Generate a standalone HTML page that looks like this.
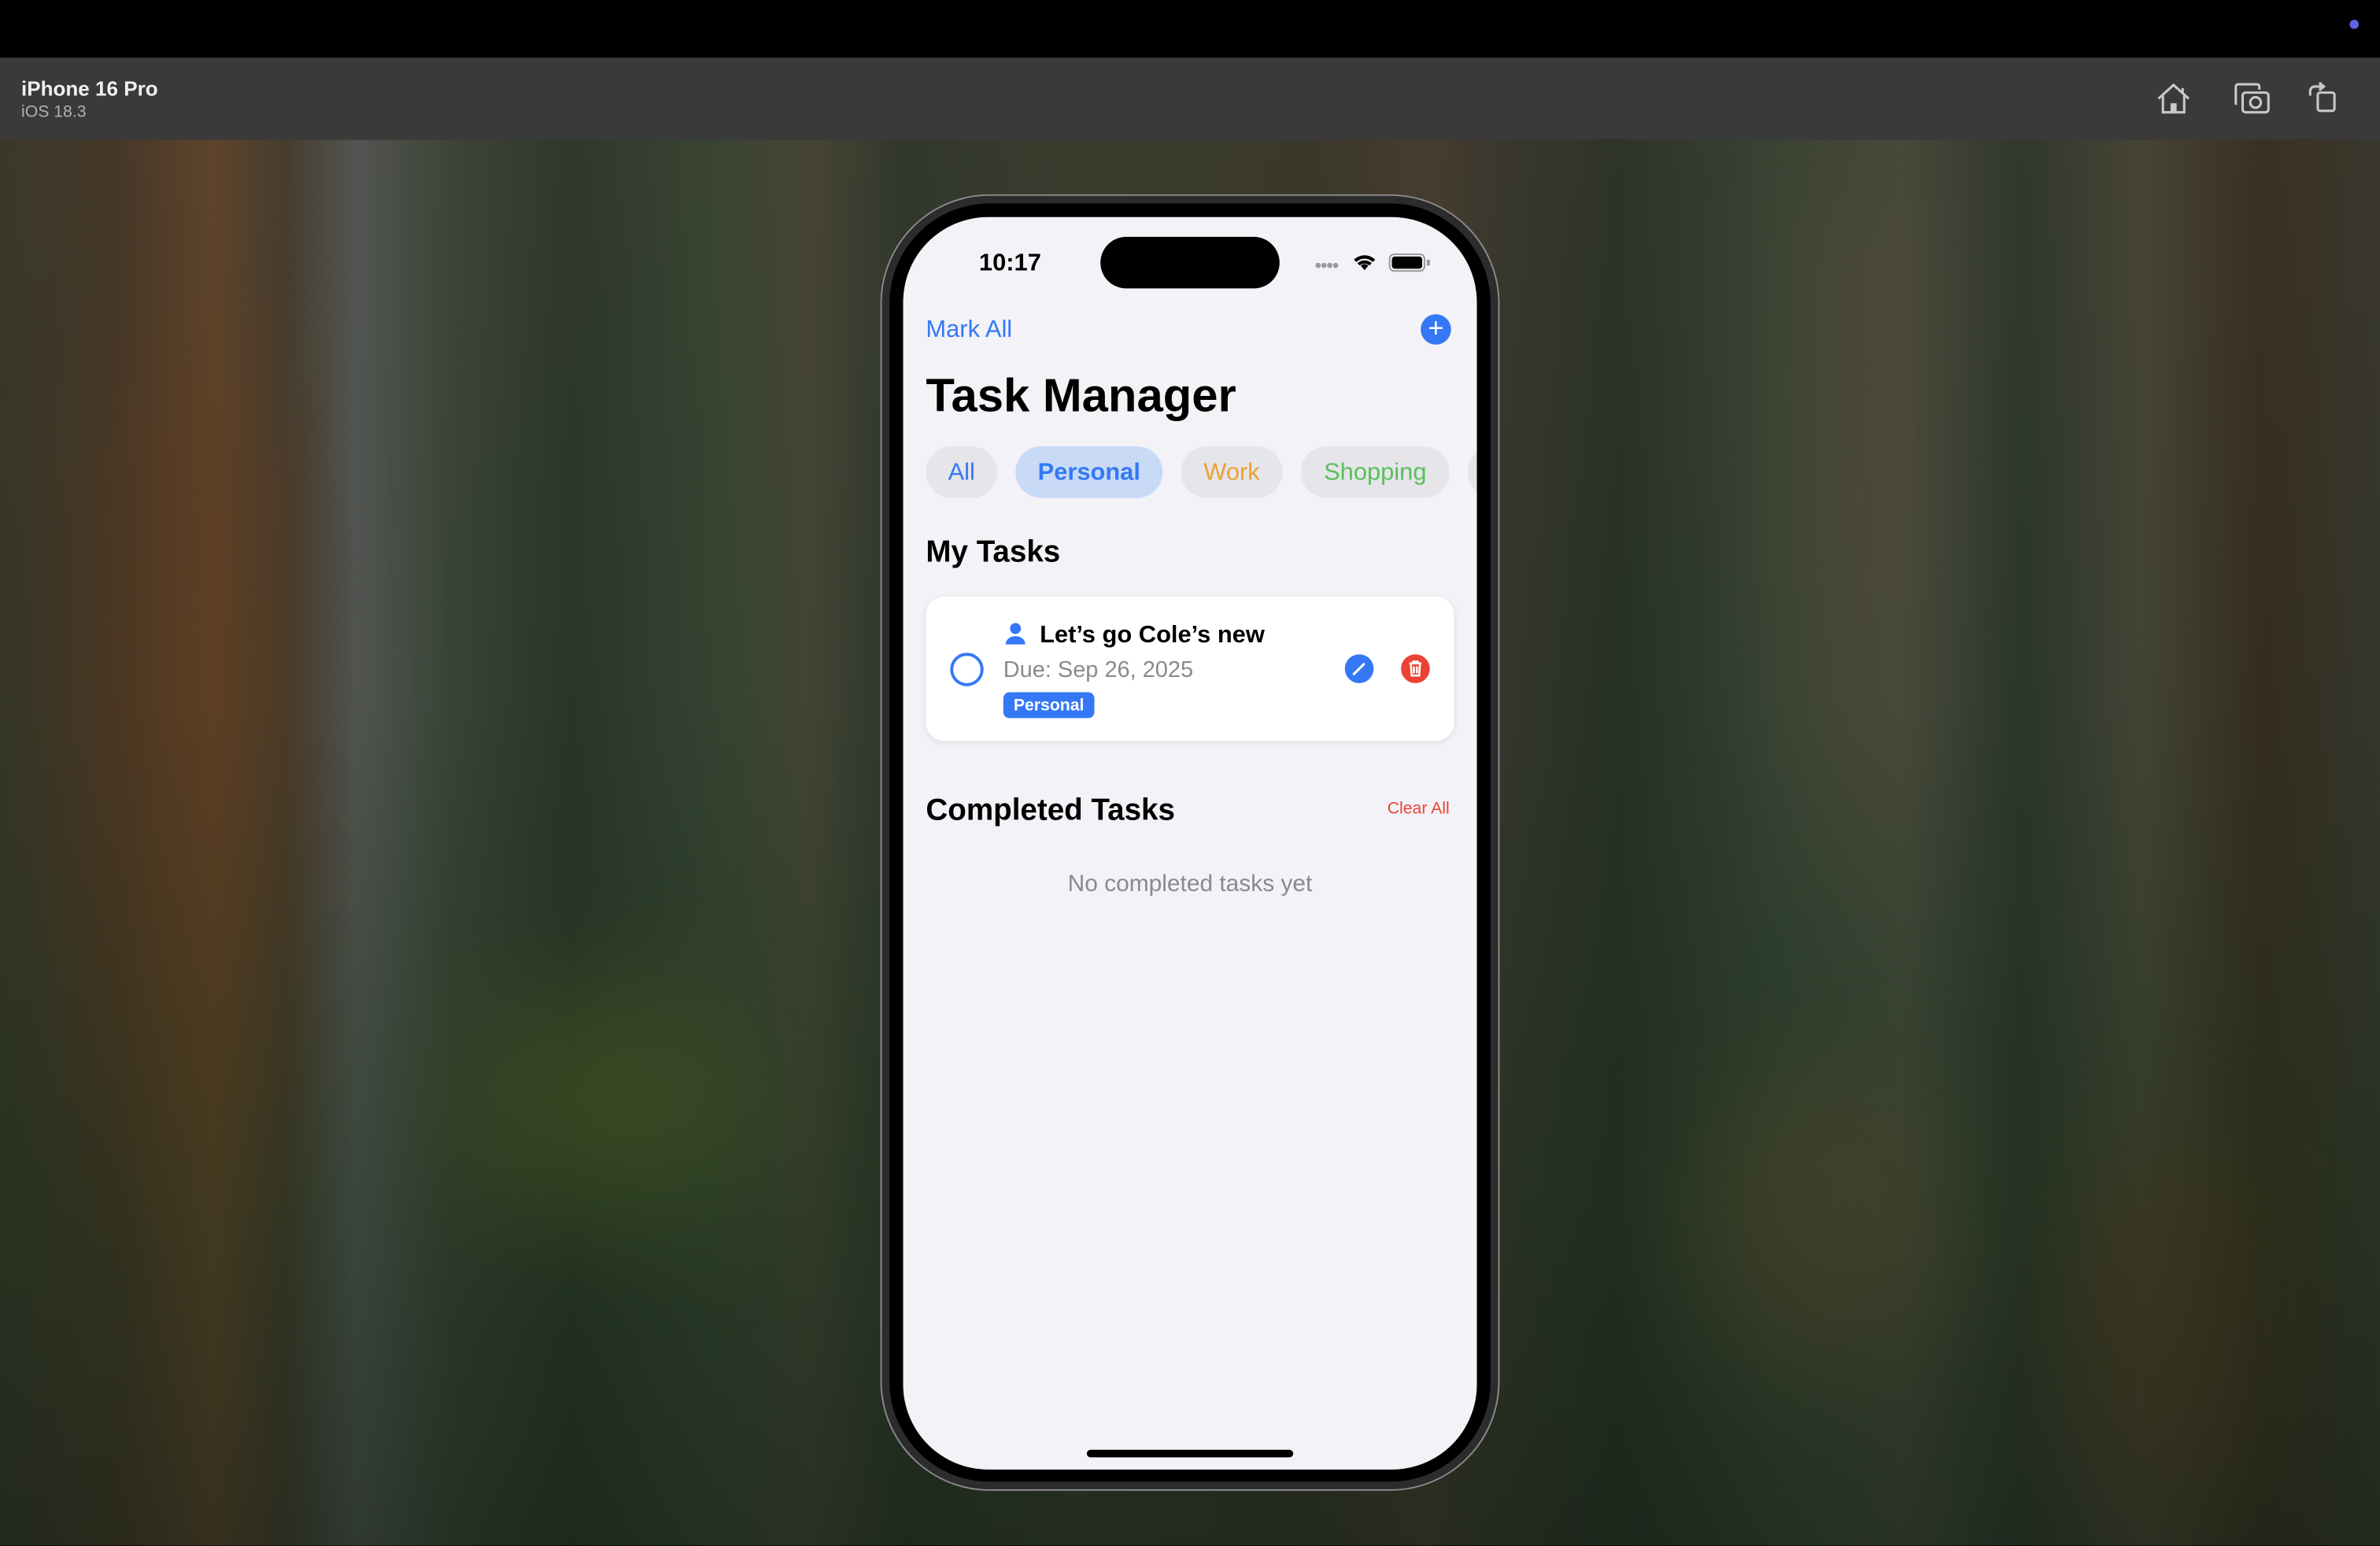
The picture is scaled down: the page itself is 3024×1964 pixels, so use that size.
<!DOCTYPE html>
<html><head><meta charset="utf-8"><style>
*{margin:0;padding:0;box-sizing:border-box}
html,body{width:3024px;height:1964px;overflow:hidden;background:#000}
#s{position:absolute;left:0;top:0;width:1568px;height:1018px;transform:scale(1.928571);transform-origin:0 0;font-family:"Liberation Sans",sans-serif}
.topbar{position:absolute;left:0;top:0;width:1568px;height:38px;background:#000}
.tool{position:absolute;left:0;top:38px;width:1568px;height:54px;background:#3a3a3a}
.bg{position:absolute;left:0;top:92px;width:1568px;height:926px;overflow:hidden;
background:linear-gradient(90deg,#3a3a2c 0%,#4a3a28 5%,#6a4a2c 9%,#4a4030 12%,#5a6060 15%,#3e4a3a 19%,#2c3a2c 24%,#3a4a36 30%,#4a4a3a 34%,#2e3a2c 38%,#3a4030 45%,#3a3a2c 55%,#4a4030 60%,#3a3a30 63%,#2a3428 68%,#3a4a38 75%,#4a5040 80%,#2e3a2e 85%,#4a4a3a 90%,#3a3020 95%,#3a3a30 100%)}
.bg .v{position:absolute;inset:0;background:linear-gradient(180deg,rgba(60,50,40,.25) 0%,rgba(20,30,20,.15) 40%,rgba(20,40,20,.45) 75%,rgba(20,30,20,.6) 100%)}
.blob{position:absolute;border-radius:50%;filter:blur(40px)}
.phone{position:absolute;left:580px;top:128px;width:408px;height:854px;border-radius:72px;background:#2c2c2c;border:1px solid #8a8a8a}
.bezel{position:absolute;left:586px;top:134px;width:396px;height:842px;border-radius:66px;background:#000}
.screen{position:absolute;left:595px;top:143px;width:378px;height:825px;border-radius:56px;background:#f2f2f7;overflow:hidden}
.abs{position:absolute;white-space:nowrap}
.chip{position:absolute;top:151px;height:34px;border-radius:17px;background:#e5e5ea;font-size:16px;line-height:36px;text-align:center}
</style></head><body><div id="s">
<div class="topbar"><div style="position:absolute;left:1548px;top:13px;width:6px;height:6px;border-radius:50%;background:#6161e8"></div></div>
<div class="tool">
<div class="abs" style="left:14px;top:13px;color:#f0f0f0;font-weight:bold;font-size:13.5px">iPhone 16 Pro</div>
<div class="abs" style="left:14px;top:30px;color:#b0b0b0;font-size:11px">iOS 18.3</div>
<svg style="position:absolute;left:1420px;top:16px" width="24" height="22" viewBox="0 0 24 22" fill="none" stroke="#c8c8c8" stroke-width="1.6"><path d="M2 11 L12 2 L22 11 M5 9 V20 H19 V9 M18 4 V8"/><rect x="10" y="14" width="4" height="6" fill="#c8c8c8" stroke="none"/></svg>
<svg style="position:absolute;left:1471px;top:16px" width="26" height="22" viewBox="0 0 26 22" fill="none" stroke="#c8c8c8" stroke-width="1.6"><path d="M2 15 V3 a1.5 1.5 0 0 1 1.5-1.5 H16 a1.5 1.5 0 0 1 1.5 1.5 V5"/><rect x="6.5" y="7" width="17" height="13" rx="2"/><circle cx="15" cy="13.5" r="3.5"/></svg>
<svg style="position:absolute;left:1519px;top:15px" width="22" height="24" viewBox="0 0 22 24" fill="none" stroke="#c8c8c8" stroke-width="1.6"><rect x="8" y="8" width="11" height="12" rx="1.5"/><path d="M3 10 V7 a3 3 0 0 1 3-3 H11"/><path d="M9 1.5 L12 4 L9 6.5" fill="#c8c8c8"/></svg>
</div>
<div class="bg">
<div class="blob" style="left:300px;top:560px;width:200px;height:160px;background:#5a6a2a;opacity:.7"></div>
<div class="blob" style="left:1120px;top:620px;width:160px;height:200px;background:#7a5a3a;opacity:.6"></div>
<div class="blob" style="left:1360px;top:660px;width:120px;height:260px;background:#6a4020;opacity:.6"></div>
<div class="blob" style="left:60px;top:120px;width:140px;height:600px;background:#6a3e20;opacity:.5"></div>
<div class="blob" style="left:1180px;top:0px;width:80px;height:500px;background:#6a5040;opacity:.45"></div>
<div class="v"></div>
</div>
<div class="phone"></div><div class="bezel"></div>
<div class="screen">
<div class="abs" style="left:50px;top:22px;font-size:16px;font-weight:bold;color:#000">10:17</div>
<div style="position:absolute;left:130px;top:13px;width:118px;height:34px;border-radius:17px;background:#000"></div>
<div class="abs" style="left:271px;top:27px;font-size:8px;color:#9a9a9a;letter-spacing:-1px">●●●●</div>
<svg style="position:absolute;left:296px;top:23px" width="16" height="13" viewBox="0 0 16 13"><path d="M8 12 L5.5 9 a3.5 3.5 0 0 1 5 0z M1 5 a10 10 0 0 1 14 0 l-1.6 1.6 a7.7 7.7 0 0 0-10.8 0z M3.3 7.4 a6.8 6.8 0 0 1 9.4 0 l-1.5 1.5 a4.7 4.7 0 0 0-6.4 0z" fill="#000"/></svg>
<div style="position:absolute;left:320px;top:24px;width:24px;height:12px;border-radius:3.5px;border:1px solid #999;padding:1px"><div style="width:100%;height:100%;background:#000;border-radius:2px"></div></div>
<div style="position:absolute;left:345px;top:28px;width:1.5px;height:4px;background:#999"></div>
<div class="abs" style="left:15px;top:66px;font-size:16px;color:#3478f6">Mark All</div>
<div style="position:absolute;left:341px;top:64px;width:20px;height:20px;border-radius:50%;background:#3478f6;color:#fff;font-size:18px;line-height:19px;text-align:center">+</div>
<div class="abs" style="left:15px;top:100px;font-size:31px;font-weight:bold;color:#000">Task Manager</div>
<div class="chip" style="left:15px;width:47px;color:#3478f6">All</div>
<div class="chip" style="left:74px;width:97px;background:#c8daf6;color:#3478f6;font-weight:bold">Personal</div>
<div class="chip" style="left:183px;width:67px;color:#f0a030">Work</div>
<div class="chip" style="left:262px;width:98px;color:#5ac05a">Shopping</div>
<div class="chip" style="left:372px;width:40px"></div>
<div class="abs" style="left:15px;top:210px;font-size:20px;font-weight:bold;color:#000">My Tasks</div>
<div style="position:absolute;left:15px;top:250px;width:348px;height:95px;border-radius:12px;background:#fff;box-shadow:0 1px 4px rgba(0,0,0,.08)"></div>
<div style="position:absolute;left:31px;top:287px;width:22px;height:22px;border-radius:50%;border:2.5px solid #3478f6"></div>
<svg style="position:absolute;left:67px;top:267px" width="14" height="15" viewBox="0 0 14 15"><circle cx="7" cy="4" r="3.6" fill="#3478f6"/><path d="M0.5 14.5 a6.5 5.5 0 0 1 13 0z" fill="#3478f6"/></svg>
<div class="abs" style="left:90px;top:267px;font-size:16px;font-weight:bold;color:#000">Let’s go Cole’s new</div>
<div class="abs" style="left:66px;top:290px;font-size:15px;color:#8a8a8e">Due: Sep 26, 2025</div>
<div class="abs" style="left:66px;top:313px;width:60px;height:17px;border-radius:4px;background:#3478f6;color:#fff;font-size:11px;font-weight:bold;line-height:18px;text-align:center">Personal</div>
<div style="position:absolute;left:291px;top:288px;width:19px;height:19px;border-radius:50%;background:#3478f6"></div>
<svg style="position:absolute;left:291px;top:288px" width="19" height="19" viewBox="0 0 19 19"><path d="M6 13 L12.5 6.5" stroke="#fff" stroke-width="1.6" stroke-linecap="round"/></svg>
<div style="position:absolute;left:328px;top:288px;width:19px;height:19px;border-radius:50%;background:#eb4234"></div>
<svg style="position:absolute;left:328px;top:288px" width="19" height="19" viewBox="0 0 19 19" fill="none" stroke="#fff" stroke-width="1.3"><path d="M5.5 6 H13.5 M8 6 V4.8 H11 V6 M6.5 6.5 L7 14 H12 L12.5 6.5 M8.5 8 V12.5 M10.5 8 V12.5"/></svg>
<div class="abs" style="left:15px;top:380px;font-size:20px;font-weight:bold;color:#000">Completed Tasks</div>
<div class="abs" style="left:319px;top:384px;font-size:11px;color:#eb4234">Clear All</div>
<div class="abs" style="left:0;width:378px;text-align:center;top:431px;font-size:15.5px;color:#8a8a8e">No completed tasks yet</div>
<div style="position:absolute;left:121px;top:812px;width:136px;height:5px;border-radius:3px;background:#000"></div>
</div>
</div></body></html>
